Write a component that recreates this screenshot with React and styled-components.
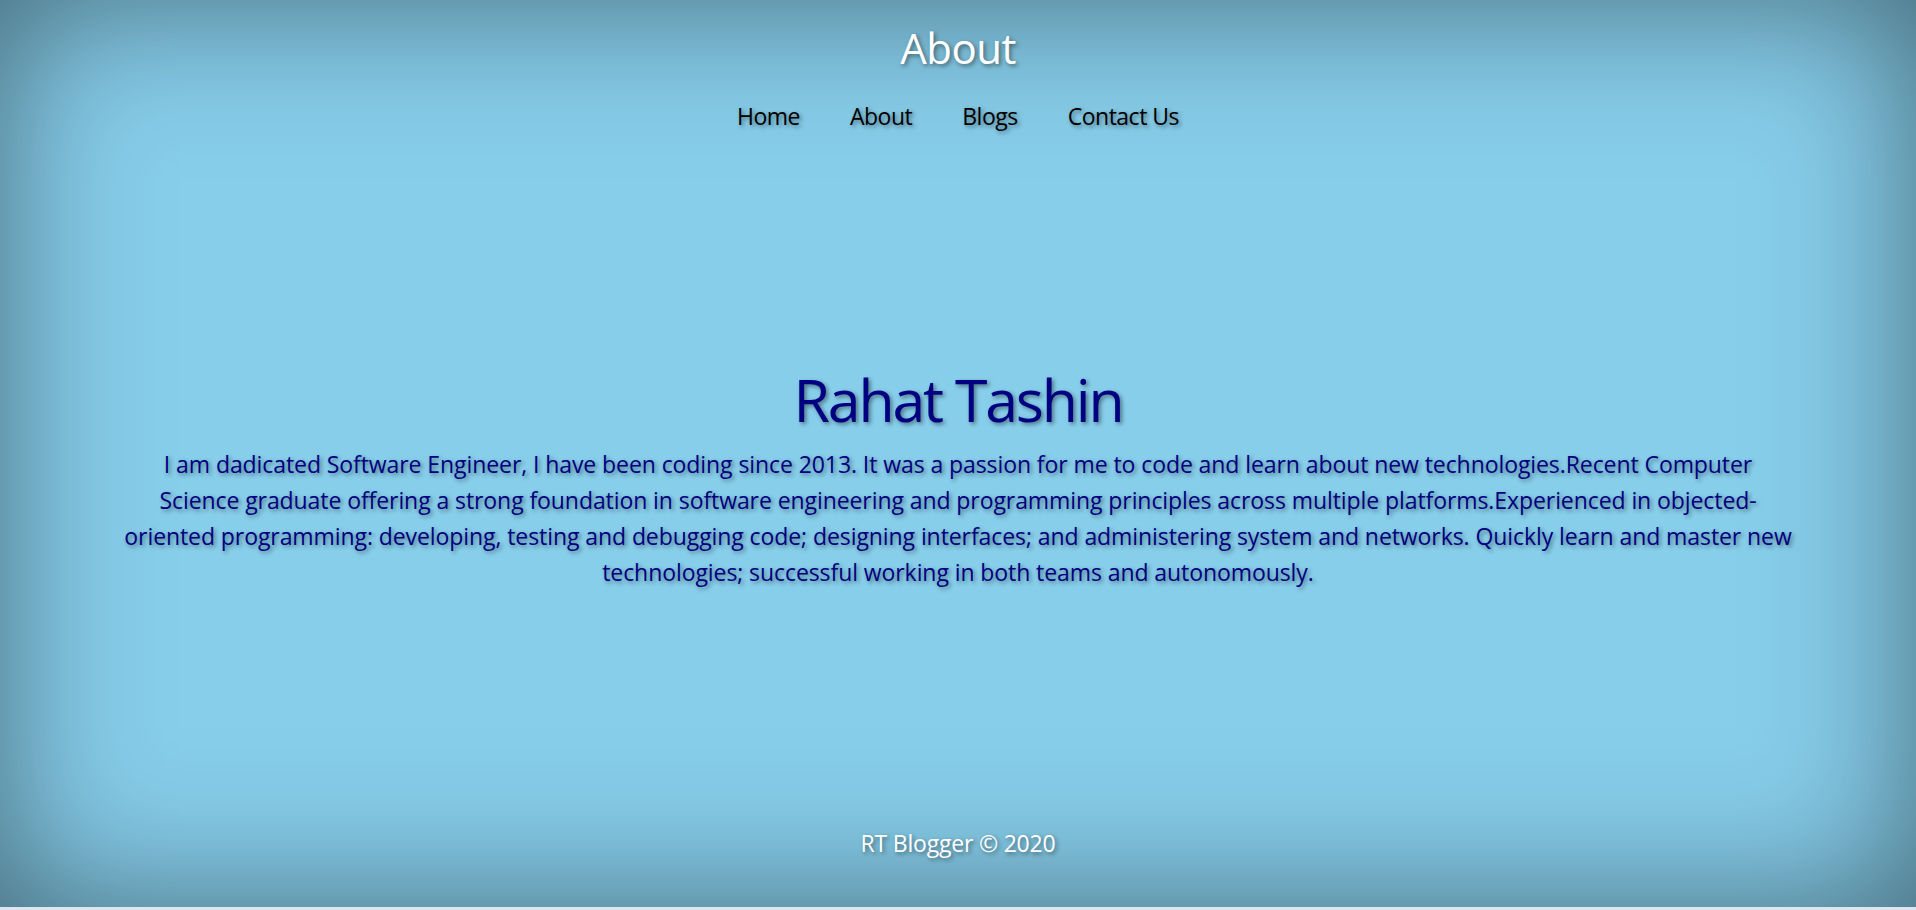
import React from "react";
import styled, { createGlobalStyle } from "styled-components";

const GlobalStyle = createGlobalStyle`
  html, body {
    margin: 0;
    padding: 0;
  }

  body {
    background: #dde6ee;
    font-family: "Open Sans", "Noto Sans", sans-serif;
  }
`;

const Page = styled.div`
  min-height: 907px;
  display: flex;
  flex-direction: column;
  background-color: #87ceeb;
  box-shadow: inset 0 0 150px rgba(0, 0, 0, 0.5);
  text-shadow: 2px 2px 4px rgba(0, 0, 0, 0.45);
`;

const Header = styled.header`
  padding-top: 20px;
  text-align: center;
`;

const Title = styled.h1`
  margin: 0;
  font-size: 42px;
  font-weight: 400;
  line-height: 56px;
  color: #ffffff;
  letter-spacing: -0.5px;
`;

const Nav = styled.nav`
  display: flex;
  justify-content: center;
  gap: 50px;
  margin-top: 24px;
`;

const NavLink = styled.a`
  font-size: 23px;
  line-height: 32px;
  color: #000000;
  text-decoration: none;
  letter-spacing: -0.5px;
  cursor: pointer;
`;

const Main = styled.main`
  flex: 1;
  display: flex;
  flex-direction: column;
  justify-content: center;
  align-items: center;
  padding: 0 100px 11px;
  color: #000080;
  text-align: center;
`;

const Name = styled.h2`
  margin: 0;
  font-size: 59px;
  font-weight: 400;
  line-height: 80px;
  letter-spacing: -2.2px;
`;

const Bio = styled.p`
  margin: 7px 0 0;
  font-size: 23px;
  line-height: 36px;
  letter-spacing: -0.08px;
  white-space: nowrap;
`;

const Footer = styled.footer`
  padding-bottom: 48px;
  text-align: center;
  color: #ffffff;
  font-size: 23px;
  line-height: 32px;
  letter-spacing: -0.2px;
`;

const links = ["Home", "About", "Blogs", "Contact Us"];

const bioLines = [
  "I am dadicated Software Engineer, I have been coding since 2013. It was a passion for me to code and learn about new technologies.Recent Computer",
  "Science graduate offering a strong foundation in software engineering and programming principles across multiple platforms.Experienced in objected-",
  "oriented programming: developing, testing and debugging code; designing interfaces; and administering system and networks. Quickly learn and master new",
  "technologies; successful working in both teams and autonomously.",
];

const App = () => {
  return (
    <>
      <GlobalStyle />
      <Page>
        <Header>
          <Title>About</Title>
          <Nav>
            {links.map((link) => (
              <NavLink key={link}>{link}</NavLink>
            ))}
          </Nav>
        </Header>
        <Main>
          <Name>Rahat Tashin</Name>
          <Bio>
            {bioLines.map((line, i) => (
              <React.Fragment key={i}>
                {line}
                {i < bioLines.length - 1 && <br />}
              </React.Fragment>
            ))}
          </Bio>
        </Main>
        <Footer>RT Blogger © 2020</Footer>
      </Page>
    </>
  );
};

export default App;
